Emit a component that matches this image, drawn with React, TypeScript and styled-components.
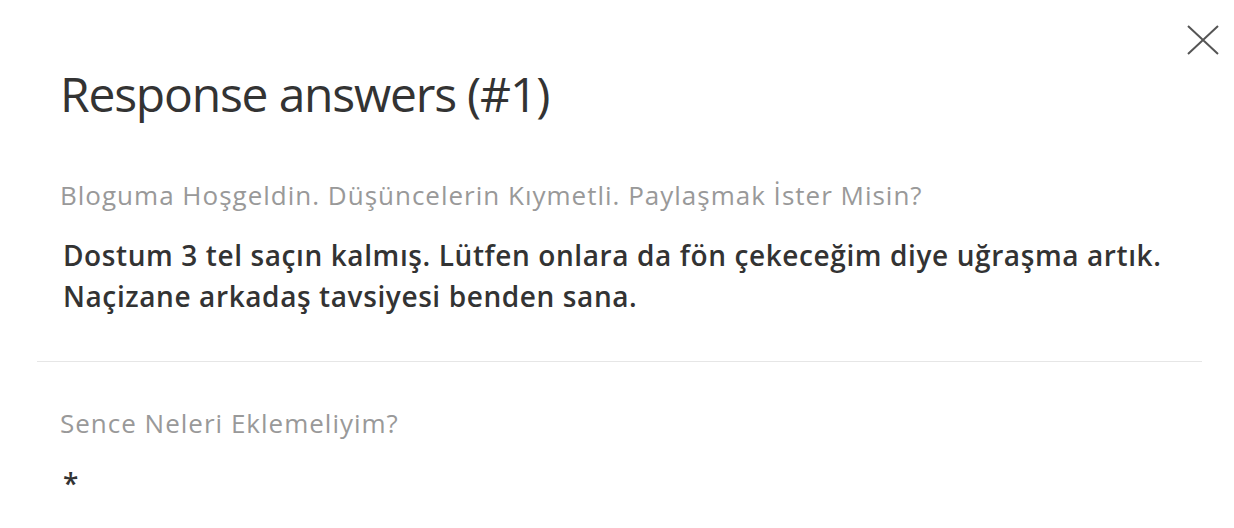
import React from "react";
import styled, { createGlobalStyle } from "styled-components";

const Global = createGlobalStyle`
  html, body { margin: 0; padding: 0; background: #fff; }
  body { font-family: "Open Sans", "Noto Sans", sans-serif; color: #333; }
`;

const Modal = styled.div`
  position: relative;
  width: 1234px;
  height: 528px;
  box-sizing: border-box;
  padding: 0 32px 0 37px;
  background: #fff;
  overflow: hidden;
`;

const Close = styled.button`
  position: absolute;
  top: 22px;
  right: 13px;
  width: 36px;
  height: 36px;
  padding: 0;
  border: 0;
  background: transparent;
  display: flex;
  align-items: center;
  justify-content: center;
  cursor: pointer;
`;

const Title = styled.h1`
  margin: 0;
  padding: 64px 0 0 23px;
  font-size: 48px;
  line-height: 60px;
  letter-spacing: -1.2px;
  font-weight: 400;
  color: #333;
`;

const Section = styled.div<{ $top: number; $bottom?: number; $divider?: boolean }>`
  padding: ${(p) => p.$top}px 0 ${(p) => p.$bottom ?? 0}px 23px;
  border-bottom: ${(p) => (p.$divider ? "1px solid #e6e6e6" : "none")};
  display: flex;
  flex-direction: column;
  gap: 23px;
`;

const Question = styled.div`
  font-size: 26px;
  line-height: 34px;
  letter-spacing: 1px;
  color: #999;
  font-weight: 400;
`;

const Answer = styled.div`
  font-size: 28px;
  line-height: 41px;
  letter-spacing: 0.6px;
  font-weight: 600;
  color: #333;
  padding-left: 3px;
`;

export default function App() {
  return (
    <>
      <Global />
      <Modal>
        <Close aria-label="Close">
          <svg width="34" height="32" viewBox="0 0 34 32">
            <path d="M2 2 L32 30 M32 2 L2 30" stroke="#555" strokeWidth="2" fill="none" />
          </svg>
        </Close>
        <Title>Response answers (#1)</Title>
        <Section $top={54} $bottom={44} $divider>
          <Question>Bloguma Hoşgeldin. Düşüncelerin Kıymetli. Paylaşmak İster Misin?</Question>
          <Answer>
            Dostum 3 tel saçın kalmış. Lütfen onlara da fön çekeceğim diye uğraşma artık.
            <br />
            Naçizane arkadaş tavsiyesi benden sana.
          </Answer>
        </Section>
        <Section $top={44}>
          <Question>Sence Neleri Eklemeliyim?</Question>
          <Answer>*</Answer>
        </Section>
      </Modal>
    </>
  );
}
